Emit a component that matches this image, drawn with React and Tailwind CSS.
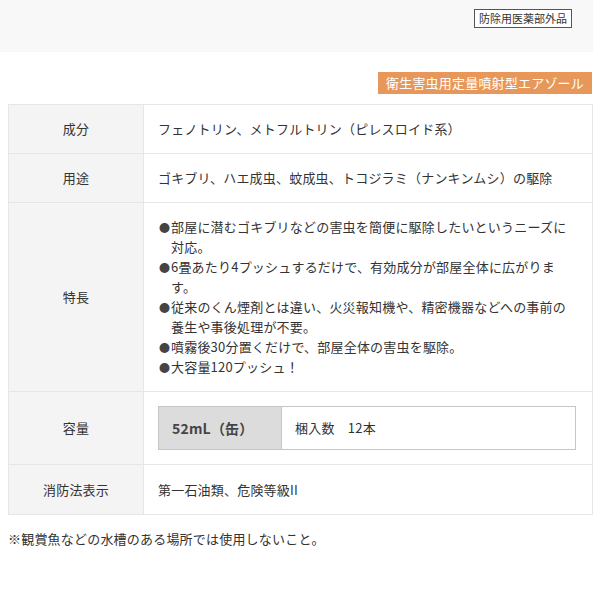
const rows = [
  { label: '成分', h: 'h-[49px]', body: 'フェノトリン、メトフルトリン（ピレスロイド系）' },
  { label: '用途', h: 'h-[49px]', body: 'ゴキブリ、ハエ成虫、蚊成虫、トコジラミ（ナンキンムシ）の駆除' },
];

const features = [
  ['部屋に潜むゴキブリなどの害虫を簡便に駆除したいというニーズに', '対応。'],
  ['6畳あたり4プッシュするだけで、有効成分が部屋全体に広がりま', 'す。'],
  ['従来のくん煙剤とは違い、火災報知機や、精密機器などへの事前の', '養生や事後処理が不要。'],
  ['噴霧後30分置くだけで、部屋全体の害虫を駆除。'],
  ['大容量120プッシュ！'],
];

function Label({ children }) {
  return (
    <td className="w-[135px] bg-[#f4f4f4] border border-[#e6e6e6] text-center align-middle text-[#333]">
      {children}
    </td>
  );
}

export default function App() {
  return (
    <div
      className="w-[593px] bg-white text-[13px] text-[#333] tracking-[0.2px]"
      style={{ fontFamily: '"Noto Sans CJK JP", "Noto Sans", sans-serif' }}
    >
      <div className="h-[52px] bg-[#f8f8f8] flex justify-end items-start pt-[9px] pr-[21px]">
        <span className="border border-[#555] bg-white text-[11px] leading-[17px] px-[4px] text-[#333] tracking-normal">
          防除用医薬部外品
        </span>
      </div>

      <div className="flex justify-end mt-[20px] pr-[1px]">
        <span className="bg-[#e8975a] text-white text-[13px] h-[22px] leading-[22px] px-[8px]">
          衛生害虫用定量噴射型エアゾール
        </span>
      </div>

      <table className="ml-[8px] mt-[10px] w-[585px] border-collapse leading-[20px]">
        <tbody>
          {rows.map((r) => (
            <tr key={r.label} className={r.h}>
              <Label>{r.label}</Label>
              <td className="border border-[#e6e6e6] pl-[14px] align-middle">{r.body}</td>
            </tr>
          ))}
          <tr className="h-[188px]">
            <Label>特長</Label>
            <td className="border border-[#e6e6e6] pl-[14px] py-[14px] align-middle">
              {features.map((f, i) => (
                <div key={i} className="flex whitespace-nowrap">
                  <span className="w-[13px] shrink-0 text-[11px] text-[#444] pl-[1px]">●</span>
                  <span>
                    {f.map((line, j) => (
                      <div key={j}>{line}</div>
                    ))}
                  </span>
                </div>
              ))}
            </td>
          </tr>
          <tr className="h-[73px]">
            <Label>容量</Label>
            <td className="border border-[#e6e6e6] pl-[14px] pr-[16px] align-middle">
              <div className="flex h-[44px] border border-[#c6c6c6]">
                <div className="w-[123px] bg-[#dcdcdc] border-r border-[#c6c6c6] flex items-center pl-[13px] font-bold text-[14px] text-[#444]">
                  52mL（缶）
                </div>
                <div className="flex-1 flex items-center pl-[13px]">梱入数　12本</div>
              </div>
            </td>
          </tr>
          <tr className="h-[50px]">
            <Label>消防法表示</Label>
            <td className="border border-[#e6e6e6] pl-[14px] align-middle">第一石油類、危険等級II</td>
          </tr>
        </tbody>
      </table>

      <p className="ml-[8px] mt-[14px] leading-[20px] pb-[50px]">
        ※観賞魚などの水槽のある場所では使用しないこと。
      </p>
    </div>
  );
}
